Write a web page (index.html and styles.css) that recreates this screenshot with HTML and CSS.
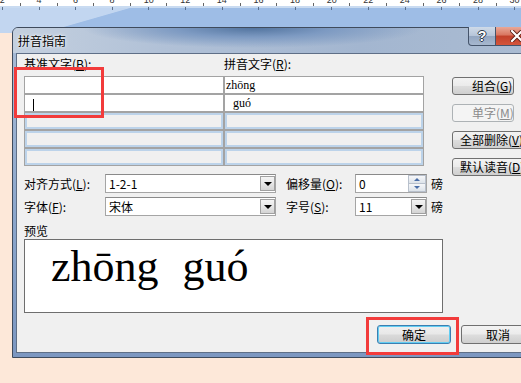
FILE: index.html
```html
<!DOCTYPE html>
<html lang="zh-CN">
<head>
<meta charset="utf-8">
<title>拼音指南</title>
<link rel="stylesheet" href="styles.css">
</head>
<body>
<div class="ruler">
  <div class="ruler-nums">
    <span>2</span><span>4</span><span>6</span><span>8</span><span>10</span><span>12</span><span>14</span><span>16</span><span>18</span><span>20</span><span>22</span><span>24</span><span>26</span><span>28</span><span>30</span>
  </div>
</div>
<div class="band"></div>

<div class="win">
  <div class="titlebar">
    <span class="title">拼音指南</span>
    <div class="caps">
      <span class="help">?</span>
      <span class="close"><svg width="14" height="12" viewBox="0 0 14 12"><path d="M2 1 L12 11 M12 1 L2 11" stroke="#5a1e14" stroke-width="4" stroke-linecap="square"/><path d="M2 1 L12 11 M12 1 L2 11" stroke="#fff" stroke-width="2.2" stroke-linecap="square"/></svg></span>
    </div>
  </div>
  <div class="client">
    <div class="top">
      <div class="left">
        <div class="heads">
          <span class="head">基准文字(<u>B</u>):</span>
          <span class="head">拼音文字(<u>R</u>):</span>
        </div>
        <div class="grid">
          <div class="cell"></div>
          <div class="cell py">zhōng</div>
          <div class="cell"><span class="caret"></span></div>
          <div class="cell py indent">guó</div>
          <div class="cell dis"></div>
          <div class="cell dis"></div>
          <div class="cell dis"></div>
          <div class="cell dis"></div>
          <div class="cell dis"></div>
          <div class="cell dis"></div>
        </div>
      </div>
      <div class="btns">
        <div class="btn narrow">组合(<u>G</u>)</div>
        <div class="btn narrow disabled">单字(<u>M</u>)</div>
        <div class="btn wide">全部删除(<u>V</u>)</div>
        <div class="btn wide">默认读音(<u>D</u>)</div>
      </div>
    </div>

    <div class="opts">
      <span class="olbl">对齐方式(<u>L</u>):</span>
      <div class="combo"><span class="val">1-2-1</span><span class="arrow"><i></i></span></div>
      <span class="olbl second">偏移量(<u>O</u>):</span>
      <div class="combo"><span class="val">0</span><span class="spin"><b class="up"><i></i></b><b class="dn"><i></i></b></span></div>
      <span class="unit">磅</span>

      <span class="olbl">字体(<u>F</u>):</span>
      <div class="combo"><span class="val">宋体</span><span class="arrow"><i></i></span></div>
      <span class="olbl second">字号(<u>S</u>):</span>
      <div class="combo"><span class="val">11</span><span class="arrow"><i></i></span></div>
      <span class="unit">磅</span>
    </div>

    <div class="prevlbl">预览</div>
    <div class="preview"><span class="syl">zhōng</span><span class="syl">guó</span></div>

    <div class="foot">
      <div class="btn big focus">确定</div>
      <div class="btn big">取消</div>
    </div>
  </div>
</div>

<div class="mark m1"></div>
<div class="mark m2"></div>
</body>
</html>
```
FILE: styles.css
```css
* { box-sizing: border-box; margin: 0; padding: 0; }

body {
  width: 521px;
  height: 383px;
  overflow: hidden;
  position: relative;
  background: #fde8d9;
  font-family: "Noto Sans CJK SC", "Noto Sans", sans-serif;
  font-size: 12px;
  color: #000;
}

u { text-decoration: underline; text-underline-offset: 1px; }

/* ruler + blue band */
.ruler {
  height: 6px;
  background:
    repeating-linear-gradient(to right, transparent 0 20px, #666 20px 21px, transparent 21px 36.6px) 0 3px / 100% 3px no-repeat,
    #fff;
  overflow: hidden;
}
.ruler-nums { display: flex; margin-left: -16px; }
.ruler-nums span {
  flex: none;
  width: 36.6px;
  text-align: center;
  font-family: "Liberation Sans", sans-serif;
  font-size: 9px;
  line-height: 9px;
  margin-top: -4px;
  color: #333;
}

.band {
  height: 27px;
  background:
    repeating-linear-gradient(to right, transparent 0 2px, #5b6f8a 2px 3px, transparent 3px 36.6px) 0 1px / 100% 3px no-repeat,
    linear-gradient(to bottom, #c9dbf1 0 2px, transparent 2px),
    linear-gradient(164deg, #c2d6f0 0 22%, transparent 22.5%),
    #9ebde6;
}

/* window */
.win {
  position: absolute;
  left: 12px;
  top: 27px;
  width: 536px;
  height: 331px;
  border: 1px solid #3f4b5c;
  border-radius: 6px 6px 0 0;
  background: linear-gradient(to bottom, #a9bcd6 0%, #8aa5cb 60%, #7c97c1 100%);
  display: flex;
  flex-direction: column;
}

.titlebar {
  height: 25px;
  display: flex;
  align-items: flex-start;
  border-radius: 5px 5px 0 0;
  background:
    radial-gradient(ellipse 170px 20px at 240px 0, #52749f 0%, #7d9ac2 45%, rgba(160,180,207,0) 100%),
    linear-gradient(to right, #c4d0df 0%, #b1c1d7 28%, #a3b6d0 65%, #abbcd2 100%);
}
.title {
  padding: 7px 0 0 5px;
  line-height: 12px;
  font-size: 12px;
  color: #000;
  text-shadow: 0 0 4px rgba(255,255,255,0.9), 0 0 2px rgba(255,255,255,0.9);
}
.caps {
  margin-left: auto;
  margin-top: -1px;
  margin-right: 8px;
  display: flex;
  flex: none;
}
.help, .close {
  flex: none;
  height: 19px;
  display: flex;
  align-items: center;
  justify-content: center;
}
.help {
  width: 28px;
  border: 1px solid #45546b;
  border-top: none;
  border-radius: 0 0 0 4px;
  background: linear-gradient(to bottom, #cfdae8 0%, #b6c5d9 48%, #93a6c1 52%, #a7b8cf 100%);
  font-family: "Liberation Sans", sans-serif;
  font-weight: bold;
  font-size: 14px;
  color: #fff;
  text-shadow: 1px 0 0 #2c3848, -1px 0 0 #2c3848, 0 1px 0 #2c3848, 0 -1px 0 #2c3848;
}
.close {
  width: 43px;
  border: 1px solid #45546b;
  border-left: none;
  border-top: none;
  background: linear-gradient(to bottom, #e9a898 0%, #d9755f 45%, #c2402a 50%, #d4553b 100%);
}

.client {
  flex: 1;
  margin: 0 3px 4px 3px;
  border: 1px solid #5f6f87;
  background: #f0f0f0;
  padding-left: 7px;
  display: flex;
  flex-direction: column;
}

/* top section */
.top {
  height: 112px;
  display: flex;
  align-items: flex-start;
}
.left { padding-top: 4px; width: 400px; flex: none; }
.heads { display: flex; height: 12px; line-height: 12px; margin-bottom: 6px; }
.head { width: 200px; }
.grid {
  display: grid;
  grid-template-columns: 200px 200px;
  grid-auto-rows: 18px;
}
.cell {
  border: 1px solid #a3a3a3;
  background: #fff;
  line-height: 16px;
  padding-left: 1px;
}
.cell.py {
  font-family: "Liberation Serif", serif;
  font-size: 12px;
}
.cell.indent { padding-left: 8px; }
.cell.dis {
  background: #f0f0f0;
  box-shadow: inset 0 0 0 2px #bcd3ea;
}
.caret {
  display: inline-block;
  width: 1px;
  height: 12px;
  background: #000;
  margin-left: 7px;
  vertical-align: -3px;
}

.btns {
  margin-left: 28px;
  margin-top: 23px;
  display: flex;
  flex-direction: column;
  align-items: flex-start;
  gap: 9px;
  flex: none;
}
.btn {
  height: 18px;
  line-height: 16px;
  border: 1px solid #707070;
  border-radius: 3px;
  background: linear-gradient(to bottom, #f3f3f3 0%, #ebebeb 48%, #dddddd 52%, #cfcfcf 100%);
  white-space: nowrap;
  font-size: 12px;
}
.btn.narrow { width: 62px; padding-left: 19px; }
.btn.wide { width: 82px; padding-left: 7px; }
.btn.disabled {
  border-color: #adb2b5;
  background: #f4f4f4;
  color: #8b8b8b;
}

/* options */
.opts {
  margin-top: 8px;
  display: grid;
  grid-template-columns: 81px 171px 79px 72px auto;
  grid-auto-rows: 19px;
  row-gap: 4px;
  align-items: center;
}
.olbl { line-height: 12px; }
.olbl.second { padding-left: 10px; }
.unit { padding-left: 4px; line-height: 12px; }
.combo {
  height: 19px;
  border: 1px solid #a5a5a5;
  border-top-color: #8a8a8a;
  background: #fff;
  display: flex;
  align-items: center;
  padding-left: 3px;
}
.val { line-height: 12px; }
.arrow {
  margin-left: auto;
  width: 15px;
  height: 15px;
  border: 1px solid #a0a0a0;
  background: linear-gradient(to bottom, #f4f4f4 0%, #e6e6e6 50%, #d4d4d4 100%);
  display: flex;
  align-items: center;
  justify-content: center;
}
.arrow i {
  width: 0;
  height: 0;
  border-left: 4px solid transparent;
  border-right: 4px solid transparent;
  border-top: 4px solid #000;
}
.spin {
  margin-left: auto;
  width: 18px;
  height: 17px;
  display: flex;
  flex-direction: column;
}
.spin b {
  flex: 1;
  border: 1px solid #b8c0cc;
  background: linear-gradient(to bottom, #f6f7f9, #dde3ea);
  display: flex;
  align-items: center;
  justify-content: center;
}
.spin b.dn { border-top: none; }
.spin i {
  width: 0;
  height: 0;
  border-left: 3px solid transparent;
  border-right: 3px solid transparent;
}
.spin .up i { border-bottom: 3px solid #4a6ea8; }
.spin .dn i { border-top: 3px solid #4a6ea8; }

/* preview */
.prevlbl { margin-top: 9px; line-height: 12px; height: 12px; }
.preview {
  margin-top: 2px;
  width: 419px;
  height: 74px;
  border: 1px solid #6e6e6e;
  background: #fff;
  padding: 2px 0 0 26px;
  font-family: "Liberation Serif", serif;
  font-size: 44px;
  line-height: 50px;
  white-space: nowrap;
}
.syl { display: inline-block; margin-right: 24px; }

/* footer */
.foot {
  margin-top: 12px;
  display: flex;
  justify-content: flex-end;
  gap: 10px;
  padding-right: 8px;
}
.btn.big {
  width: 74px;
  height: 19px;
  line-height: 17px;
  text-align: center;
}
.btn.focus {
  border-color: #3c7fb1;
  box-shadow: inset 0 0 0 1px #62cdf2;
  background: linear-gradient(to bottom, #f0f0f0 0%, #e8e8e8 48%, #dadada 52%, #cdcdcd 100%);
}

/* red annotation boxes */
.mark {
  position: absolute;
  border: 3px solid #f23b3b;
}
.m1 { left: 14px; top: 67px; width: 90px; height: 51px; }
.m2 { left: 366px; top: 317px; width: 93px; height: 38px; }
```
